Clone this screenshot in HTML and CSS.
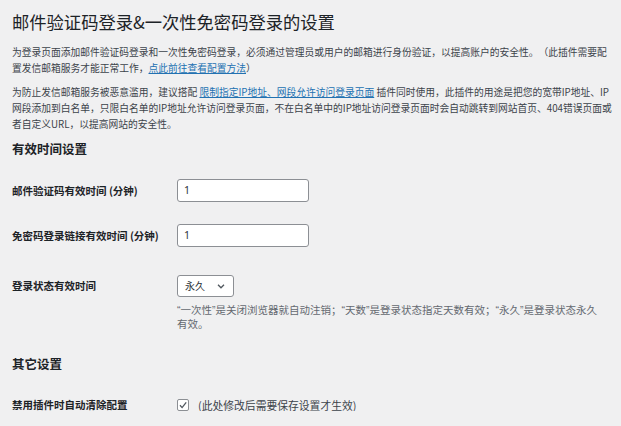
FILE: index.html
```html
<!DOCTYPE html>
<html lang="zh-CN">
<head>
<meta charset="utf-8">
<title>邮件验证码登录&amp;一次性免密码登录的设置</title>
<link rel="stylesheet" href="styles.css">
</head>
<body>
<div class="wrap">
  <h1 class="page-title">邮件验证码登录&amp;一次性免密码登录的设置</h1>
  <p class="intro">为登录页面添加邮件验证码登录和一次性免密码登录，必须通过管理员或用户的邮箱进行身份验证，以提高账户的安全性。（此插件需要配置发信邮箱服务才能正常工作，<a href="#" class="link">点此前往查看配置方法</a>）</p>
  <p class="intro">为防止发信邮箱服务被恶意滥用，建议搭配 <a href="#" class="link">限制指定IP地址、网段允许访问登录页面</a> 插件同时使用，此插件的用途是把您的宽带IP地址、IP网段添加到白名单，只限白名单的IP地址允许访问登录页面，不在白名单中的IP地址访问登录页面时会自动跳转到网站首页、404错误页面或者自定义URL，以提高网站的安全性。</p>

  <h2 class="section-title">有效时间设置</h2>
  <div class="form-rows">
    <div class="row row-first">
      <label class="row-label">邮件验证码有效时间 (分钟)</label>
      <div class="row-field"><div class="text-input">1</div></div>
    </div>
    <div class="row row-second">
      <label class="row-label">免密码登录链接有效时间 (分钟)</label>
      <div class="row-field"><div class="text-input">1</div></div>
    </div>
    <div class="row row-third">
      <label class="row-label label-select">登录状态有效时间</label>
      <div class="row-field">
        <div class="select-box">
          <span class="select-value">永久</span>
          <svg class="chevron" width="8" height="5" viewBox="0 0 8 5"><path d="M1 0.8 L4 3.8 L7 0.8" fill="none" stroke="#50575e" stroke-width="1.3"/></svg>
        </div>
        <p class="description">“一次性”是关闭浏览器就自动注销；“天数”是登录状态指定天数有效；“永久”是登录状态永久有效。</p>
      </div>
    </div>
  </div>

  <h2 class="section-title section-other">其它设置</h2>
  <div class="form-rows">
    <div class="row row-check">
      <label class="row-label label-check">禁用插件时自动清除配置</label>
      <div class="row-field check-field">
        <span class="checkbox">
          <svg width="12" height="12" viewBox="0 0 12 12"><path d="M3 6.3 L5.1 8.6 L9.2 3.4" fill="none" stroke="#50575e" stroke-width="1.3"/></svg>
        </span>
        <span class="check-text">(此处修改后需要保存设置才生效)</span>
      </div>
    </div>
  </div>
</div>
</body>
</html>
```

FILE: styles.css
```css
html, body {
  margin: 0;
  padding: 0;
  background: #f0f0f1;
}

body {
  font-family: "Noto Sans CJK SC", "Noto Sans", sans-serif;
  color: #3c434a;
  text-spacing-trim: space-all;
}

.wrap {
  padding: 10px 0 0 12px;
  width: 600px;
}

.page-title {
  margin: 0 0 10px;
  font-size: 17.3px;
  line-height: 24px;
  font-weight: 400;
  color: #1d2327;
}

.intro {
  margin: 0 0 8px;
  font-size: 9.75px;
  line-height: 16px;
}

.link {
  color: #2271b1;
  text-decoration: underline;
}

.section-title {
  margin: 7px 0 0;
  font-size: 12.5px;
  line-height: 18px;
  font-weight: 700;
  color: #1d2327;
}

.section-other {
  margin-top: 24px;
}

.form-rows {
  display: flex;
  flex-direction: column;
}

.row {
  display: grid;
  grid-template-columns: 165px 1fr;
  align-items: start;
}

.row-first { margin-top: 21px; }
.row-second { margin-top: 22px; }
.row-third { margin-top: 28px; }
.row-check { margin-top: 26px; }

.row-label {
  font-size: 10.5px;
  font-weight: 600;
  line-height: 23px;
  color: #1d2327;
}

.label-select { line-height: 22px; }
.label-check { line-height: 12px; }

.text-input {
  box-sizing: border-box;
  width: 132px;
  height: 23px;
  border: 1px solid #8c8f94;
  border-radius: 3px;
  background: #fff;
  padding: 0 6px;
  font-family: "Noto Sans", sans-serif;
  font-size: 10.5px;
  line-height: 21px;
  color: #2c3338;
}

.select-box {
  box-sizing: border-box;
  width: 57px;
  height: 22px;
  border: 1px solid #8c8f94;
  border-radius: 3px;
  background: #fff;
  padding: 0 8px 0 7px;
  display: flex;
  align-items: center;
  justify-content: space-between;
}

.select-value {
  font-size: 10px;
  line-height: 20px;
  color: #2c3338;
}

.chevron { display: block; }

.description {
  margin: 6px 0 0;
  max-width: 426px;
  font-family: "Liberation Sans", "Noto Sans CJK SC", sans-serif;
  font-size: 10.5px;
  line-height: 14px;
  color: #646970;
}

.check-field {
  display: flex;
  align-items: center;
  gap: 9px;
}

.checkbox {
  box-sizing: border-box;
  width: 12px;
  height: 12px;
  border: 1px solid #8c8f94;
  border-radius: 2px;
  background: #fff;
  display: flex;
  align-items: center;
  justify-content: center;
}

.checkbox svg {
  display: block;
  margin: -1px;
}

.check-text {
  font-size: 10.8px;
  line-height: 12px;
  color: #3c434a;
}
```
